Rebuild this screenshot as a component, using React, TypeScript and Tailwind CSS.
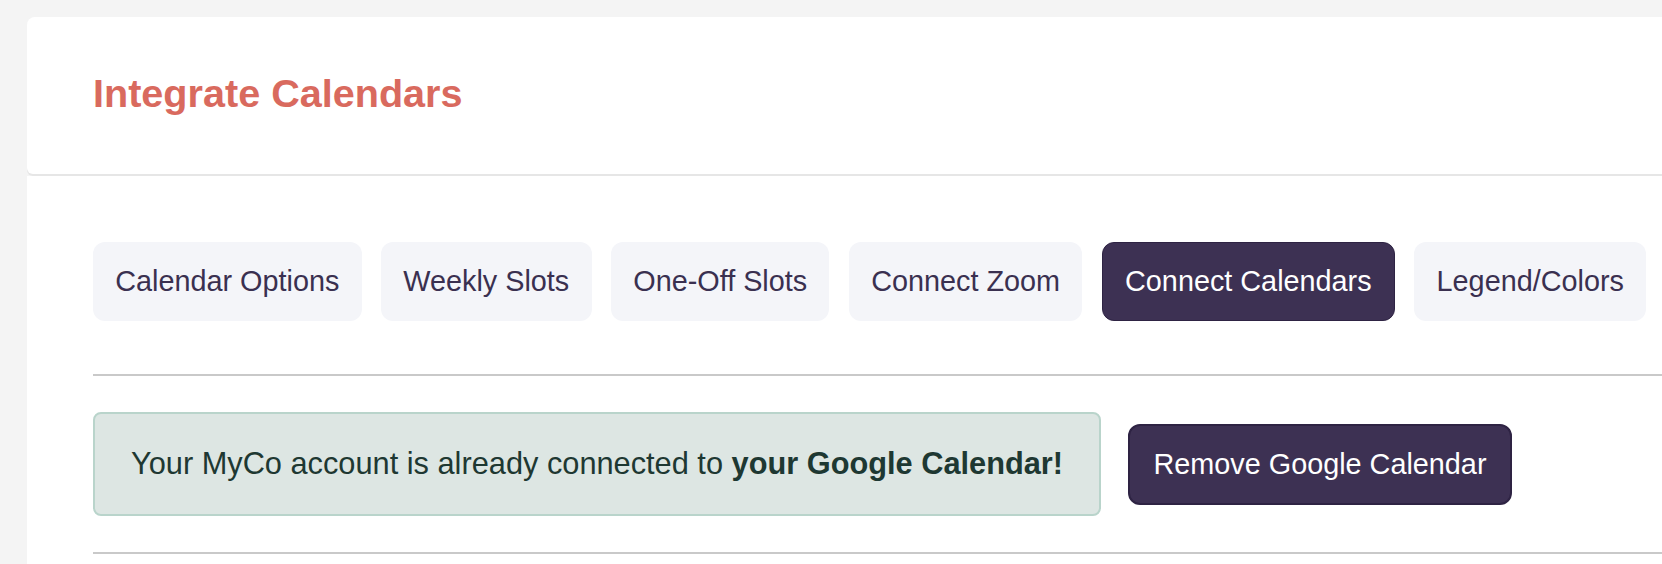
import React, { useState } from 'react';

const tabs = [
  'Calendar Options',
  'Weekly Slots',
  'One-Off Slots',
  'Connect Zoom',
  'Connect Calendars',
  'Legend/Colors',
];

export default function App() {
  const [active, setActive] = useState('Connect Calendars');

  return (
    <div
      className="h-[564px] w-full overflow-hidden bg-[#f4f4f4] pl-[27px] pt-[17px]"
      style={{ fontFamily: '"Liberation Sans", Arial, Helvetica, sans-serif' }}
    >
      <div className="w-[1700px]">
        {/* Header */}
        <div className="flex h-[157px] items-center rounded-t-lg rounded-b-md bg-white pb-[4px] pl-[66px] shadow-[0_2px_0_#e6e6e6]">
          <h1 className="text-[39.6px] font-bold leading-none text-[#d96a5e]">Integrate Calendars</h1>
        </div>

        {/* Body */}
        <div className="mt-[2px] bg-white pl-[66px] pt-[66px] pb-10">
          {/* Tabs */}
          <div className="flex gap-[19.5px]">
            {tabs.map((tab) => {
              const isActive = tab === active;
              return (
                <button
                  key={tab}
                  onClick={() => setActive(tab)}
                  className={`h-[79px] rounded-[12px] px-[22.25px] text-[28.8px] leading-none ${
                    isActive
                      ? 'border border-[#2e2343] bg-[#3d3153] text-white'
                      : 'bg-[#f4f5f9] text-[#3a3050]'
                  }`}
                >
                  {tab}
                </button>
              );
            })}
          </div>

          <div className="mt-[53px] h-[2px] bg-[#c9c9c9]" />

          {/* Connected status */}
          <div className="flex items-center gap-[27px] py-[36px]">
            <div className="flex h-[104px] items-center rounded-[8px] border-2 border-[#b9d4cb] bg-[#dde6e3] px-[36px] text-[30.75px] text-[#1e3832]">
              <p>
                Your MyCo account is already connected to <b>your Google Calendar!</b>
              </p>
            </div>
            <button className="h-[81px] rounded-[12px] border-2 border-[#2e2343] bg-[#3d3153] px-[23.5px] text-[28.8px] leading-none text-white">
              Remove Google Calendar
            </button>
          </div>

          <div className="h-[2px] bg-[#c9c9c9]" />
        </div>
      </div>
    </div>
  );
}
